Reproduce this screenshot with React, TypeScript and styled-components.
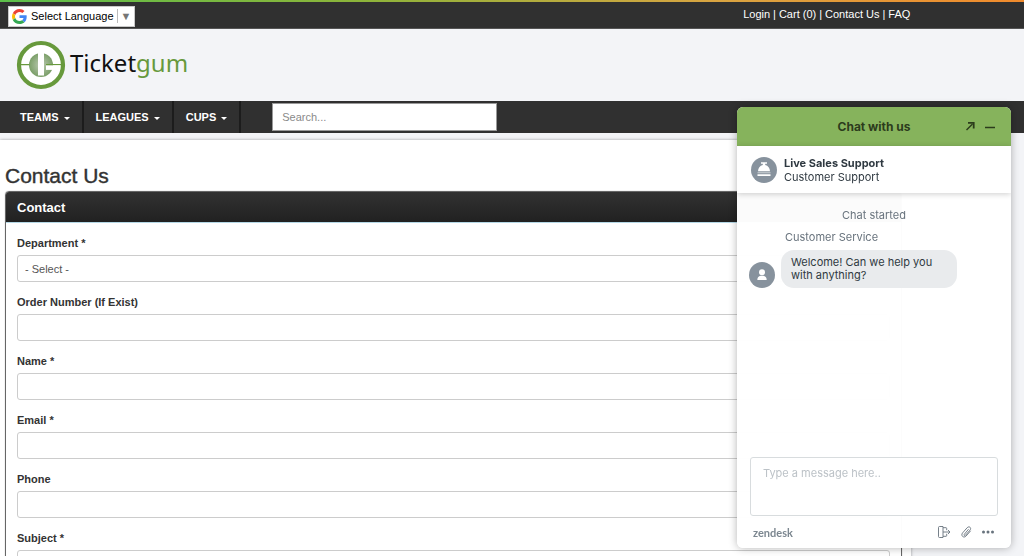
import React from "react";
import styled, { createGlobalStyle } from "styled-components";

const Global = createGlobalStyle`
  *, *::before, *::after { box-sizing: border-box; }
  html { scrollbar-width: none; }
  body {
    margin: 0;
    background: #f3f4f7;
    color: #333;
    font: 11px/16px "Liberation Sans", Arial, sans-serif;
  }
  button, input, select, textarea { font: inherit; color: inherit; margin: 0; }
  a { color: inherit; text-decoration: none; }
`;

const Accent = styled.div`
  height: 2px;
  background: linear-gradient(90deg, #5cbf4a, #8cb43a 35%, #d9a441 70%, #f08a2c);
`;

const TopBar = styled.div`
  background: #303030;
  border-bottom: 1px solid #555;
`;

const Container = styled.div`
  width: 89%;
  display: flex;
  align-items: center;
`;

const TopInner = styled(Container)`
  height: 26px;
  justify-content: space-between;
  padding: 0 1px 0 8px;
`;

const Language = styled.button`
  display: flex;
  align-items: center;
  height: 21px;
  margin-top: 2px;
  padding: 0 3px;
  background: #fff;
  border: 1px solid #c9c9c9;
  border-radius: 0;
  color: #000;
`;

const LanguageText = styled.span`
  padding: 0 3px 0 4px;
`;

const LanguageArrow = styled.span`
  border-left: 1px solid #bbb;
  padding-left: 3px;
  line-height: 14px;
  color: #767676;
`;

const TopLinks = styled.nav`
  display: flex;
  gap: 3px;
  color: #fff;
  line-height: 16px;
  padding-bottom: 2px;
`;

const Header = styled.header`
  display: flex;
  align-items: center;
  height: 72px;
  padding: 0 16px;
`;

const Logo = styled.a`
  display: flex;
  align-items: center;
  gap: 4px;
`;

const LogoText = styled.span`
  font: 24px/32px "Noto Sans", sans-serif;
  color: #111;
  padding-bottom: 4px;
`;

const LogoAccent = styled.span`
  color: #67993c;
`;

const NavBar = styled.nav`
  background: #303030;
`;

const NavInner = styled(Container)`
  height: 32px;
  align-items: stretch;
  padding-left: 8px;
`;

const NavItem = styled.button`
  display: flex;
  align-items: center;
  gap: 5px;
  padding: 0 12px;
  border: 0;
  border-right: 2px solid #1c1c1c;
  background: none;
  color: #fff;
  font-weight: bold;

  &::after {
    content: "";
    margin-top: 2px;
    border: 3px solid transparent;
    border-top-color: #fff;
    border-bottom: 0;
  }
`;

const Search = styled.input`
  width: 225px;
  height: 28px;
  margin: 2px 0 0 31px;
  padding: 0 9px;
  border: 1px solid #999;
  border-radius: 0;
  background: #fff;
  &::placeholder { color: #8a8a8a; opacity: 1; }
`;

const Main = styled.main`
  width: 89%;
  margin-top: 7px;
  padding: 24px 9px 16px 5px;
  background: #fff;
  box-shadow: 0 0 3px rgba(0, 0, 0, 0.35);
`;

const Title = styled.h1`
  margin: 0 0 3px;
  font-size: 21px;
  line-height: 24px;
  font-weight: normal;
  -webkit-text-stroke: 0.4px #333;
`;

const Panel = styled.section`
  border: 1px solid #666;
  border-radius: 4px;
  box-shadow: 0 0 1px #888;
`;

const PanelHeading = styled.h2`
  margin: 0;
  padding: 1px 11px 0;
  border-radius: 3px 3px 0 0;
  border-bottom: 1px solid #b5d8e6;
  background: linear-gradient(#323232, #212121);
  color: #fff;
  font-size: 13px;
  line-height: 29px;
`;

const Form = styled.form`
  padding: 12px 11px;
`;

const Field = styled.div`
  margin-bottom: 12px;
`;

const Label = styled.label`
  display: block;
  margin-bottom: 4px;
  font-weight: bold;
`;

const Input = styled.input`
  display: block;
  width: 100%;
  height: 27px;
  padding: 0 7px;
  border: 1px solid #ccc;
  border-radius: 3px;
  background: #fff;
  color: #555;
`;

const Select = styled(Input)`
  appearance: none;
`;

const Chat = styled.aside`
  position: fixed;
  right: 13px;
  bottom: 8px;
  display: flex;
  flex-direction: column;
  width: 274px;
  height: 441px;
  overflow: hidden;
  border-radius: 6px;
  background: rgba(255, 255, 255, 0.985);
  box-shadow: 0 0 8px rgba(0, 0, 0, 0.3);
  color: #2f3941;
  font: 11px/13px Inter, sans-serif;
`;

const ChatHeader = styled.header`
  display: grid;
  grid-template-columns: 1fr auto 1fr;
  align-items: center;
  height: 39px;
  padding: 0 12px;
  background: #86b35c;
  color: #2c3c1c;
`;

const ChatTitle = styled.h2`
  grid-column: 2;
  margin: 0;
  font-size: 12px;
  font-weight: 700;
`;

const Actions = styled.div`
  display: flex;
  justify-content: flex-end;
  align-items: center;
  gap: 4px;
`;

const IconButton = styled.button`
  display: flex;
  padding: 0;
  border: 0;
  background: none;
`;

const Agent = styled.div`
  display: flex;
  align-items: center;
  gap: 7px;
  height: 47px;
  padding: 0 14px;
  background: #fff;
  box-shadow: 0 1px 6px rgba(0, 0, 0, 0.2);
  line-height: 14px;
`;

const AgentName = styled.strong`
  display: block;
  font-weight: 700;
`;

const Log = styled.div`
  flex: 1;
  padding: 16px 12px;
  color: #68737d;
`;

const Started = styled.p`
  margin: 0 0 9px;
  text-align: center;
`;

const Sender = styled.p`
  margin: 0 0 6px 36px;
`;

const MessageRow = styled.div`
  display: flex;
  align-items: flex-end;
  gap: 6px;
`;

const Bubble = styled.p`
  width: 176px;
  margin: 0;
  padding: 6px 10px;
  border-radius: 13px;
  background: #e9ebed;
  color: #2f3941;
`;

const Message = styled.textarea`
  height: 59px;
  margin: 0 13px;
  padding: 9px 12px;
  border: 1px solid #d8dcde;
  border-radius: 3px;
  background: #fff;
  resize: none;
  outline: 0;
  &::placeholder { color: #bcc2c7; opacity: 1; }
`;

const ChatFooter = styled.footer`
  display: flex;
  align-items: center;
  justify-content: space-between;
  height: 32px;
  padding: 0 16px;
  color: #68737d;
`;

const Brand = styled.a`
  font-family: Lato, sans-serif;
  font-weight: bold;
  color: #7c8790;
`;

const FooterActions = styled(Actions)`
  gap: 8px;
`;

const Google = () => (
  <svg width="15" height="15" viewBox="0 0 48 48" aria-hidden="true">
    <path fill="#EA4335" d="M24 9.5c3.5 0 6.700 1.200 9.200 3.600l6.900-6.900C35.900 2.400 30.500 0 24 0 14.600 0 6.500 5.400 2.600 13.200l8 6.200C12.400 13.700 17.700 9.500 24 9.500z" />
    <path fill="#4285F4" d="M47 24.500c0-1.600-.2-3.100-.4-4.500H24v9h12.900c-.6 3-2.200 5.500-4.800 7.200l7.700 6C44.400 38 47 31.800 47 24.500z" />
    <path fill="#FBBC05" d="M10.500 28.600c-.5-1.500-.8-3-.8-4.600s.3-3.100.8-4.600l-8-6.200C.9 16.500 0 20.100 0 24s.9 7.500 2.600 10.800l7.900-6.200z" />
    <path fill="#34A853" d="M24 48c6.500 0 11.900-2.100 15.900-5.800l-7.700-6c-2.200 1.400-4.900 2.300-8.200 2.300-6.300 0-11.600-4.200-13.500-9.900l-8 6.200C6.500 42.600 14.600 48 24 48z" />
  </svg>
);

const LogoMark = () => (
  <svg width="50" height="50" viewBox="0 0 50 50" aria-hidden="true">
    <defs>
      <radialGradient id="core">
        <stop offset="0" stopColor="#bccab3" />
        <stop offset="1" stopColor="#7b9f68" />
      </radialGradient>
    </defs>
    <circle cx="25" cy="25" r="22" fill="#fff" stroke="#67993c" strokeWidth="4.200" />
    <circle cx="25" cy="25" r="12" fill="url(#core)" />
    <path d="M3 24.700h10.500M30 24.700h16" stroke="#67993c" strokeWidth="1.300" />
    <path d="M22 12h6v23.500h-6z" fill="#fff" />
    <path d="M30 25.400h14v4.500H30z" fill="#fff" />
  </svg>
);

const Bell = () => (
  <svg width="26" height="26" viewBox="0 0 26 26" aria-hidden="true">
    <circle cx="13" cy="13" r="13" fill="#87929d" />
    <path d="M10 5.300h6v1.400h-1.800v1.200c3 .6 4.600 3 4.800 6.400H7c.2-3.400 1.800-5.800 4.800-6.400V6.700H10z" fill="#fff" />
    <path d="M6.500 15.200h13v1h-13z" fill="#cdd2d6" />
    <path d="M6.500 17.300h13v1.700h-13z" fill="#fff" />
  </svg>
);

const Person = () => (
  <svg width="26" height="26" viewBox="0 0 26 26" aria-hidden="true">
    <circle cx="13" cy="13" r="13" fill="#87929d" />
    <circle cx="13" cy="10.300" r="3" fill="#fff" />
    <path d="M8.300 18c0-3 1.500-3.800 3.200-4.300h3c1.700.5 3.200 1.300 3.200 4.300z" fill="#fff" />
  </svg>
);

const PopOut = () => (
  <svg width="16" height="16" viewBox="0 0 16 16" fill="none" stroke="currentColor" aria-hidden="true">
    <path d="M3.500 11 9.500 5" strokeWidth="1.400" />
    <path d="M5 3.800h5.700V9.500" strokeWidth="1.800" />
  </svg>
);

const Minimize = () => (
  <svg width="16" height="16" viewBox="0 0 16 16" stroke="currentColor" strokeWidth="1.400" aria-hidden="true">
    <path d="M2 8.500h10" />
  </svg>
);

const EndChat = () => (
  <svg width="14" height="14" viewBox="0 0 14 14" fill="none" stroke="currentColor" strokeWidth="0.900" aria-hidden="true">
    <path d="M6 1.500v11M6 1.500H2.500q-1 0-1 1v9q0 1 1 1H6M6 2.700h3q.7 0 .7.700v1.800M6 11.300h3q.7 0 .7-.7V8.800M6 7h6.600M11 5l2 2-2 2" />
  </svg>
);

const Clip = () => (
  <svg width="14" height="14" viewBox="0 0 14 14" fill="none" stroke="currentColor" strokeWidth="0.900" strokeLinecap="round" aria-hidden="true">
    <path d="M9.300 4.500 5.300 9.300c-.8.900.3 1.900 1.100 1l4.600-5.200c1.900-2.200-.9-4.500-2.800-2.400L3.600 7.900c-2.300 2.700 1.200 5.700 3.500 3.100l4.300-4.900" />
  </svg>
);

const Dots = () => (
  <svg width="14" height="14" viewBox="0 0 14 14" fill="currentColor" aria-hidden="true">
    <circle cx="2.500" cy="7" r="1.500" />
    <circle cx="7" cy="7" r="1.500" />
    <circle cx="11.500" cy="7" r="1.500" />
  </svg>
);

const textFields = [
  { id: "order", label: "Order Number (If Exist)" },
  { id: "name", label: "Name *" },
  { id: "email", label: "Email *" },
  { id: "phone", label: "Phone" },
  { id: "subject", label: "Subject *" },
];

export default function App() {
  return (
    <>
      <Global />
      <Accent />
      <TopBar>
        <TopInner>
          <Language type="button">
            <Google />
            <LanguageText>Select Language</LanguageText>
            <LanguageArrow>▼</LanguageArrow>
          </Language>
          <TopLinks>
            <a href="#login">Login</a>|<a href="#cart">Cart (0)</a>|
            <a href="#contact">Contact Us</a>|<a href="#faq">FAQ</a>
          </TopLinks>
        </TopInner>
      </TopBar>
      <Header>
        <Logo href="#home">
          <LogoMark />
          <LogoText>
            Ticket<LogoAccent>gum</LogoAccent>
          </LogoText>
        </Logo>
      </Header>
      <NavBar>
        <NavInner>
          <NavItem type="button">TEAMS</NavItem>
          <NavItem type="button">LEAGUES</NavItem>
          <NavItem type="button">CUPS</NavItem>
          <Search type="search" placeholder="Search..." aria-label="Search" />
        </NavInner>
      </NavBar>
      <Main>
        <Title>Contact Us</Title>
        <Panel>
          <PanelHeading>Contact</PanelHeading>
          <Form>
            <Field>
              <Label htmlFor="department">Department *</Label>
              <Select as="select" id="department">
                <option>- Select -</option>
              </Select>
            </Field>
            {textFields.map((field) => (
              <Field key={field.id}>
                <Label htmlFor={field.id}>{field.label}</Label>
                <Input id={field.id} type="text" />
              </Field>
            ))}
          </Form>
        </Panel>
      </Main>
      <Chat>
        <ChatHeader>
          <ChatTitle>Chat with us</ChatTitle>
          <Actions>
            <IconButton type="button" aria-label="Pop out"><PopOut /></IconButton>
            <IconButton type="button" aria-label="Minimize"><Minimize /></IconButton>
          </Actions>
        </ChatHeader>
        <Agent>
          <Bell />
          <div>
            <AgentName>Live Sales Support</AgentName>
            Customer Support
          </div>
        </Agent>
        <Log>
          <Started>Chat started</Started>
          <Sender>Customer Service</Sender>
          <MessageRow>
            <Person />
            <Bubble>Welcome! Can we help you with anything?</Bubble>
          </MessageRow>
        </Log>
        <Message placeholder="Type a message here.." aria-label="Message" />
        <ChatFooter>
          <Brand href="#zendesk">zendesk</Brand>
          <FooterActions>
            <IconButton type="button" aria-label="End chat"><EndChat /></IconButton>
            <IconButton type="button" aria-label="Attach file"><Clip /></IconButton>
            <IconButton type="button" aria-label="More"><Dots /></IconButton>
          </FooterActions>
        </ChatFooter>
      </Chat>
    </>
  );
}
